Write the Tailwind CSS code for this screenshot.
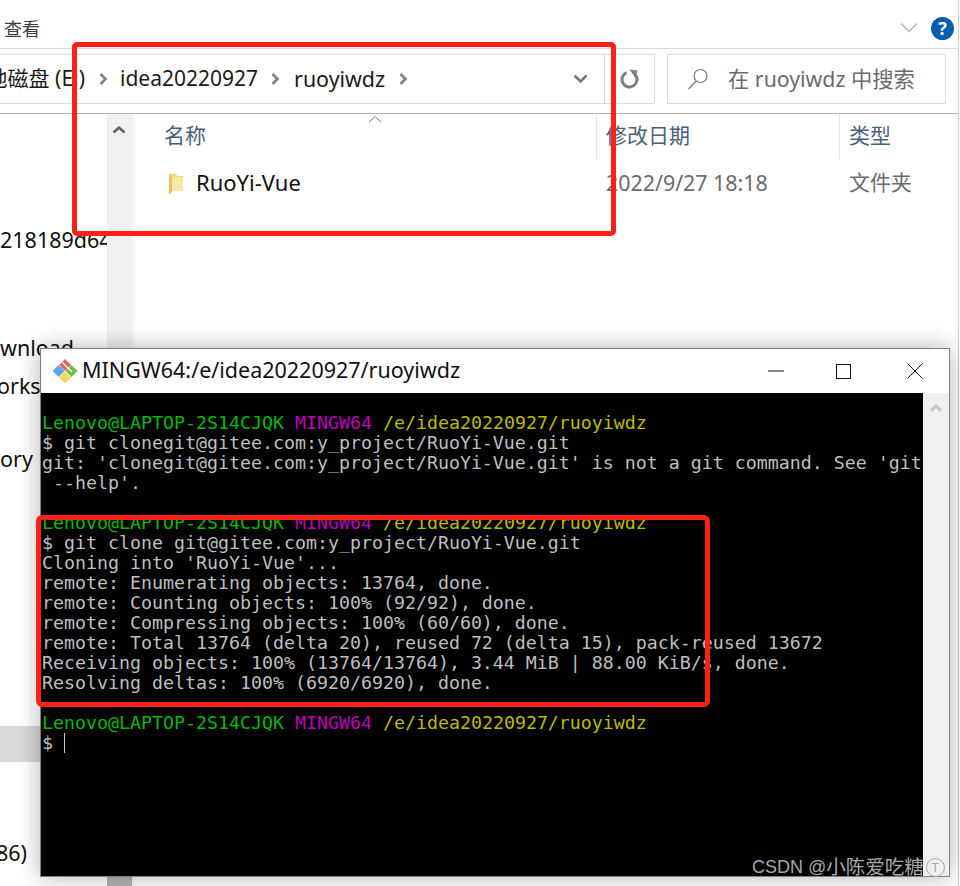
<!DOCTYPE html>
<html lang="en">
<head>
    <meta charset="UTF-8">
    <title>RuoYi-Vue clone</title>
    <script src="https://cdn.jsdelivr.net/npm/@tailwindcss/browser@4"></script>
</head>
<body class="relative w-[960px] h-[886px] overflow-hidden bg-white font-['Noto_Sans','Noto_Sans_CJK_SC',sans-serif]">

    <!-- Explorer window -->
    <div class="h-[886px] flex flex-col border-r border-[#d0d0d0] w-[959px]">
        <!-- Ribbon -->
        <div class="h-[49px] shrink-0 flex items-center border-b border-[#dadada] pl-1 pr-[4px] pt-[10px]">
            <span class="text-[18px] leading-[24px] text-[#3c3c3c]">查看</span>
            <svg class="ml-auto -mt-[2px]" width="20" height="12" viewBox="0 0 20 12" fill="none" stroke="#b4b4b4" stroke-width="1.5"><path d="M2 1.5 L10 9.5 L18 1.5"/></svg>
            <div class="ml-[12px] -mt-[2px] w-[23px] h-[23px] rounded-full bg-[#0a5cad] text-white text-[18px] leading-[23px] font-bold text-center">?</div>
        </div>

        <!-- Address row -->
        <div class="h-[65px] shrink-0 flex pt-[5px] border-b border-[#b4b4b4]">
            <div class="w-[655px] h-[50px] flex items-center border border-l-0 border-[#dadada] text-[21px] text-[#1a1a1a] whitespace-nowrap">
                <div class="w-[85px] overflow-hidden flex justify-end shrink-0"><span class="shrink-0">本地磁盘 (E:)</span></div>
                <svg class="ml-[14px]" width="9" height="14" viewBox="0 0 9 14" fill="none" stroke="#808080" stroke-width="2.6"><path d="M1.5 2 L6.5 7 L1.5 12"/></svg>
                <span class="ml-[12px]">idea20220927</span>
                <svg class="ml-[13px]" width="9" height="14" viewBox="0 0 9 14" fill="none" stroke="#808080" stroke-width="2.6"><path d="M1.5 2 L6.5 7 L1.5 12"/></svg>
                <span class="ml-[14px] text-[21.4px]">ruoyiwdz</span>
                <svg class="ml-[14px]" width="9" height="14" viewBox="0 0 9 14" fill="none" stroke="#808080" stroke-width="2.6"><path d="M1.5 2 L6.5 7 L1.5 12"/></svg>
                <svg class="ml-auto mr-[16px]" width="15" height="10" viewBox="0 0 15 10" fill="none" stroke="#777777" stroke-width="2.6"><path d="M1.5 1.5 L7.5 7.5 L13.5 1.5"/></svg>
                <div class="w-[50px] h-full border-l border-[#dadada] flex items-center justify-center">
                    <svg width="20" height="20" viewBox="0 0 20 20" fill="none" stroke="#7d7d7d" stroke-width="3"><path d="M15.5 6 A7.500 7.500 0 1 1 6.500 3.600"/><path d="M9.500 0.500 L17.500 1.500 L15.500 9 Z" stroke="none" fill="#7d7d7d"/></svg>
                </div>
            </div>
            <div class="ml-[12px] w-[279px] h-[50px] flex items-center border border-[#dadada] text-[21.3px] text-[#6b6b6b] whitespace-nowrap pl-[19px]">
                <svg width="22" height="22" viewBox="0 0 22 22" fill="none" stroke="#7a7a7a" stroke-width="1.2"><circle cx="13.5" cy="8" r="6.5"/><path d="M9 13 L1.5 21"/></svg>
                <span class="ml-[19px]">在 ruoyiwdz 中搜索</span>
            </div>
        </div>

        <!-- Body -->
        <div class="flex flex-1 min-h-0">
            <!-- Navigation pane, scrolled and clipped -->
            <div class="w-[107px] shrink-0 overflow-hidden relative text-[21.5px] leading-[28px] text-[#111111] whitespace-nowrap">
                <div class="mt-[112px]">218189d64</div>
                <div class="mt-[80px]">wnload</div>
                <div class="mt-[10px] -ml-[3px]">orksp</div>
                <div class="mt-[45px]">ory</div>
                <div class="mt-[253px] h-[36px] bg-[#d9d9d9]"></div>
                <div class="mt-[77px] -ml-[4px]">86)</div>
            </div>
            <!-- Navigation scrollbar -->
            <div class="w-[28px] shrink-0 flex flex-col border-r-[3px] border-[#f8f8f8]">
                <div class="flex-1 bg-[#f0f0f0] pt-[11px] pl-[5px]">
                    <svg width="14" height="9" viewBox="0 0 14 9" fill="none" stroke="#606060" stroke-width="2.4"><path d="M1.5 7.5 L7 2.5 L12.5 7.5"/></svg>
                </div>
                <div class="h-[12px] bg-[#b4b4b4]"></div>
            </div>
            <!-- File list -->
            <div class="flex-1 relative text-[21px]">
                <div class="h-[45px] grid grid-cols-[462px_243px_1fr] text-[#4c607a]">
                    <div class="pl-[29px] pt-[6px] leading-[30px] border-r border-[#e4e4e4]">名称</div>
                    <div class="pl-[9px] pt-[6px] leading-[30px] border-r border-[#e4e4e4]">修改日期</div>
                    <div class="pl-[9px] pt-[6px] leading-[30px]">类型</div>
                </div>
                <svg class="absolute left-[233px] top-[1px]" width="14" height="8" viewBox="0 0 14 8" fill="none" stroke="#7a7a7a"><path d="M1 7 L7 1.5 L13 7"/></svg>
                <div class="mt-[8px] grid grid-cols-[462px_243px_1fr] items-center h-[30px] text-[#6b6b6b]">
                    <div class="flex items-center pl-[33px] text-[#111111]">
                        <svg width="16" height="21" viewBox="0 0 16 21" class="shrink-0 mt-[2px]"><path d="M1 0 H8 L9 2 H15 V17 H3 L3 19 L1 20 Z" fill="#f5d77f"/><path d="M4 3 H15 V17 H4 Z" fill="#fbe7a4"/><path d="M1 0 V20 L4 18 V3 Z" fill="#e9c45c"/></svg>
                        <span class="ml-[12px] text-[22px] -mt-[1px]">RuoYi-Vue</span>
                    </div>
                    <div class="pl-[9px] text-[21.4px]">2022/9/27 18:18</div>
                    <div class="pl-[9px]">文件夹</div>
                </div>
            </div>
        </div>
    </div>

    <!-- Git Bash window -->
    <div class="absolute left-[40px] top-[348px] w-[910px] h-[529px] bg-white border border-[#7f7f7f] shadow-[0_0_22px_rgba(0,0,0,0.3)] flex flex-col">
        <div class="h-[44px] shrink-0 flex items-center pl-[11px] pb-[1px] text-[21.5px] text-[#111111]">
            <svg width="26" height="26" viewBox="0 0 26 26" class="shrink-0 mt-[1px]">
                <path d="M13 1 L7 7 L13 13 L19 7 Z" fill="#e8615c"/>
                <path d="M12.500 13 L6.500 7 L0.500 13 L6.500 19 Z" fill="#5ba7f0"/>
                <path d="M13 13.500 L7 19.500 L13 25.500 L19 19.500 Z" fill="#f6d55c"/>
                <path d="M13.500 13 L19.500 7 L25.500 13 L19.500 19 Z" fill="#6cbf4b"/>
                <path d="M10 4 L17 11 M17 11 L20 14" stroke="#ffffff" stroke-width="1.300" fill="none"/>
            </svg>
            <span class="ml-[4px]">MINGW64:/e/idea20220927/ruoyiwdz</span>
            <div class="ml-auto flex items-center pr-[26px] mt-[1px]">
                <svg width="16" height="2" viewBox="0 0 16 2"><path d="M0 1 H16" stroke="#111111"/></svg>
                <svg class="ml-[52px]" width="15" height="15" viewBox="0 0 15 15" fill="none"><rect x="0.500" y="0.500" width="14" height="14" stroke="#111111"/></svg>
                <svg class="ml-[56px]" width="16" height="16" viewBox="0 0 16 16" fill="none"><path d="M0.500 0.500 L15.500 15.500 M15.500 0.500 L0.500 15.500" stroke="#111111"/></svg>
            </div>
        </div>
        <div class="flex-1 flex min-h-0">
            <pre class="w-[882px] bg-black pt-[20px] pl-[1px] overflow-hidden font-['DejaVu_Sans_Mono',monospace] text-[18.27px] leading-[20px] text-[#bfbfbf]"><span class="text-[#00bb00]">Lenovo@LAPTOP-2S14CJQK</span> <span class="text-[#bb00bb]">MINGW64</span> <span class="text-[#bbbb00]">/e/idea20220927/ruoyiwdz</span>
$ git clonegit@gitee.com:y_project/RuoYi-Vue.git
git: 'clonegit@gitee.com:y_project/RuoYi-Vue.git' is not a git command. See 'git
 --help'.

<span class="text-[#00bb00]">Lenovo@LAPTOP-2S14CJQK</span> <span class="text-[#bb00bb]">MINGW64</span> <span class="text-[#bbbb00]">/e/idea20220927/ruoyiwdz</span>
$ git clone git@gitee.com:y_project/RuoYi-Vue.git
Cloning into 'RuoYi-Vue'...
remote: Enumerating objects: 13764, done.
remote: Counting objects: 100% (92/92), done.
remote: Compressing objects: 100% (60/60), done.
remote: Total 13764 (delta 20), reused 72 (delta 15), pack-reused 13672
Receiving objects: 100% (13764/13764), 3.44 MiB | 88.00 KiB/s, done.
Resolving deltas: 100% (6920/6920), done.

<span class="text-[#00bb00]">Lenovo@LAPTOP-2S14CJQK</span> <span class="text-[#bb00bb]">MINGW64</span> <span class="text-[#bbbb00]">/e/idea20220927/ruoyiwdz</span>
$ <span class="inline-block w-[1px] h-[20px] bg-[#c8c8c8] align-top"></span></pre>
            <div class="flex-1 bg-[#f0f0f0] pt-[10px] pl-[7px]">
                <svg width="12" height="9" viewBox="0 0 12 9" fill="none" stroke="#c4c4c4" stroke-width="2.800"><path d="M1 8 L6 2.500 L11 8"/></svg>
            </div>
        </div>
    </div>

    <!-- Red annotation boxes -->
    <div class="absolute left-[72px] top-[42px] w-[544px] h-[194px] border-[5px] border-[#ff2116] rounded-[5px]"></div>
    <div class="absolute left-[36px] top-[515px] w-[674px] h-[192px] border-[5px] border-[#ff2116] rounded-[6px]"></div>

    <!-- Watermark -->
    <div class="absolute left-[752px] top-[856px] flex items-center text-[18px] leading-[22px] text-[#a8a8a8] whitespace-nowrap font-['Liberation_Sans','Noto_Sans_CJK_SC',sans-serif]">CSDN @<span class="text-[19.5px]">小陈爱吃糖</span><span class="ml-[2px] w-[19px] h-[19px] rounded-full border border-[#a8a8a8] text-[13px] leading-[17px] text-center">T</span></div>

</body>
</html>
